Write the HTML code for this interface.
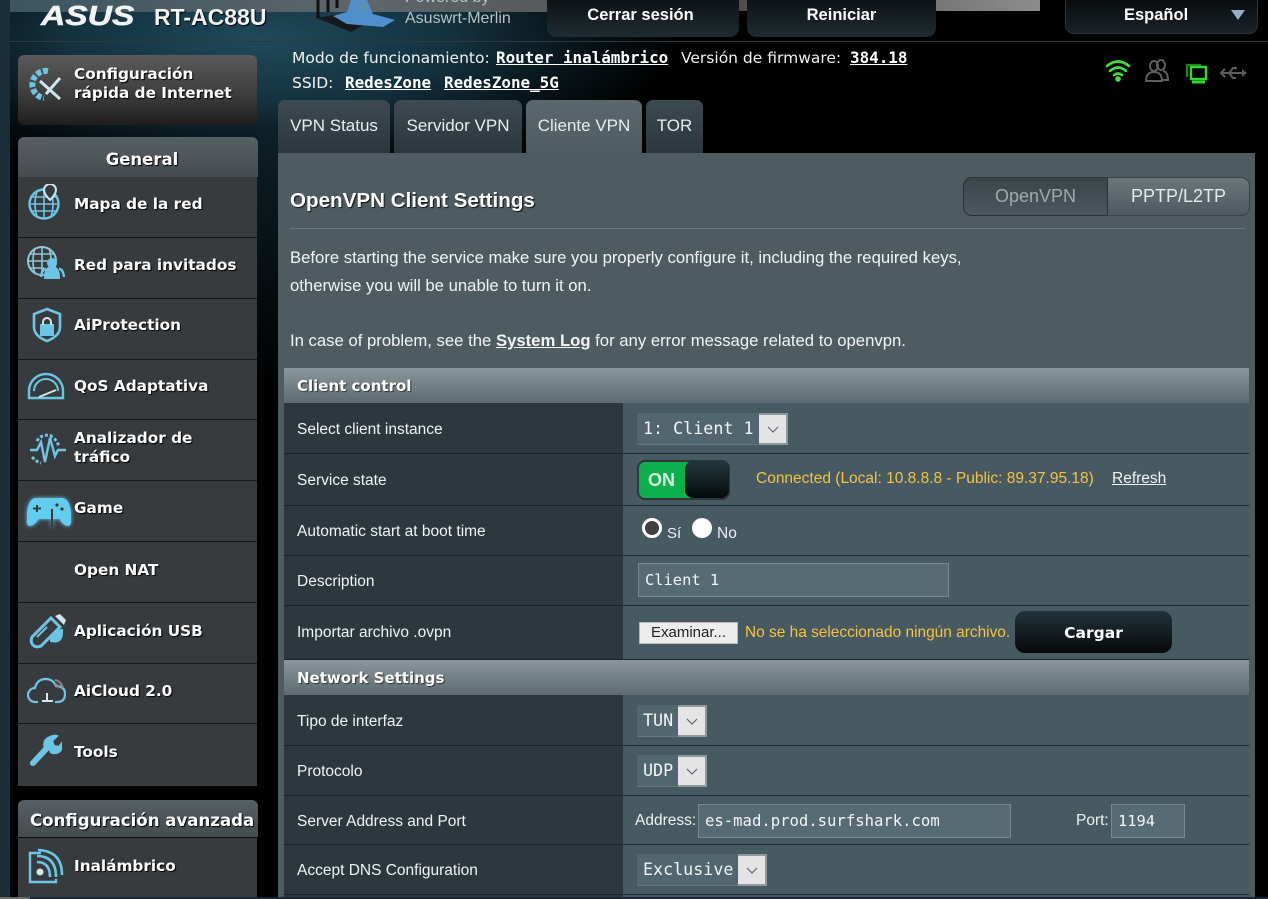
<!DOCTYPE html>
<html><head><meta charset="utf-8"><style>
html,body{margin:0;padding:0;width:1268px;height:899px;overflow:hidden;background:#000}
body{position:relative;font-family:"Liberation Sans",sans-serif;color:#fff}
.a{position:absolute;white-space:nowrap}
.dj{font-family:"DejaVu Sans",sans-serif;font-size:15.5px;line-height:20px;color:#f2f2f2}
.m{font-family:"DejaVu Sans Mono","Liberation Mono",monospace;font-size:15.9px;line-height:20px;font-weight:bold;text-decoration:underline;color:#fff}
.side{position:absolute;left:18px;width:239px;background:#383b3e;border-bottom:1px solid #15171a;box-sizing:border-box}
.st{position:absolute;left:74px;font:bold 15.3px/19px "DejaVu Sans",sans-serif;color:#fff;text-shadow:1px 1px 1px #000;white-space:nowrap}
.hd{position:absolute;background:linear-gradient(#565f64,#454c50);border-radius:6px 6px 0 0;left:18px;width:240px;border-bottom:1px solid #111}
.tab{position:absolute;top:100px;height:53px;background:linear-gradient(#3c4a51,#2c373d);border-radius:7px 7px 0 0;font-size:17px;line-height:52px;text-align:center;color:#e8eeee}
.th{position:absolute;left:284px;width:965px;height:35px;background:linear-gradient(#8a979c,#5c6b71);font:bold 15px/36px "DejaVu Sans",sans-serif;text-indent:13px;box-sizing:border-box;color:#fff;text-shadow:1px 1px 1px #333}
.l{position:absolute;left:284px;width:339px;background:#2d383e;border-bottom:1px solid #1b2327;box-sizing:border-box;font-size:15.5px;color:#f0f3f3;text-indent:13px}
.r{position:absolute;left:623px;width:626px;background:#475a61;border-bottom:1px solid #1f292e;box-sizing:border-box}
.sel{position:absolute;height:32px;background:#51666e;border-bottom:1px solid #64777e;box-sizing:border-box;font:16.7px/30px "DejaVu Sans Mono",monospace;color:#f2f5f5;text-indent:6px}
.ar{position:absolute;width:29px;height:32px;background:#e4e4e4;border:2px solid #8f999d;border-left:none;box-sizing:border-box}
.ar svg{position:absolute;left:8px;top:10px}
.inp{position:absolute;height:34px;background:#566b73;border:1px solid #76888f;box-sizing:border-box;font:15.4px/32px "DejaVu Sans Mono",monospace;color:#f2f5f5;text-indent:6px}
.y{color:#f5c242}
.ic{position:absolute;left:25px;fill:none;stroke:#6cc5e4;stroke-width:2}
.u{text-decoration:underline;font-weight:bold}
.p{font-size:16.7px;line-height:19px;color:#f2f4f4}
</style></head><body>

<!-- backgrounds -->
<div class="a" style="left:0;top:0;width:10px;height:899px;background:#1a2e3a"></div>
<div class="a" style="left:10px;top:0;width:1258px;height:160px;background:radial-gradient(ellipse 420px 140px at 250px 40px,#1f4a5a 0%,#14323f 45%,#08141a 75%,#000 100%)"></div>
<div class="a" style="left:10px;top:0;width:600px;height:12px;background:linear-gradient(90deg,#3c5560,#5d666a 60%,#555)"></div>
<div class="a" style="left:610px;top:0;width:430px;height:11px;background:linear-gradient(90deg,#333,#8c8c8c)"></div>
<div class="a" style="left:10px;top:41px;width:1258px;height:1px;background:#2c3a40"></div>
<div class="a" style="left:10px;top:160px;width:268px;height:739px;background:#000"></div>
<div class="a" style="left:257px;top:130px;width:21px;height:260px;background:linear-gradient(#0d2028,#000)"></div>

<!-- logo -->
<div class="a" style="left:41px;top:1px;font:italic bold 28px/30px 'Liberation Sans',sans-serif;letter-spacing:0;transform:scaleX(1.2);transform-origin:left;color:#f2f4f4;-webkit-text-stroke:.5px #f2f4f4">ASUS</div>
<div class="a" style="left:154px;top:4px;font:bold 23px/26px 'Liberation Sans',sans-serif;color:#f2f4f4;text-shadow:1px 1px 1px #000">RT-AC88U</div>
<svg class="a" style="left:315px;top:0" width="82" height="32" viewBox="0 0 82 32"><path d="M3 0v18M13 0v12M22 0v8" stroke="#111" stroke-width="3"/><path d="M2 18L26 14 50 24 36 32Z" fill="#16181a"/><path d="M36 0h16l6 14 22 6-12 7-36-3-14-8 14-4Z" fill="#4f90cc"/><path d="M44 0h6l4 10-12 2Z" fill="#5a8fb8"/></svg>
<div class="a" style="left:405px;top:-11px;font-size:16px;line-height:18px;color:#b9c2c4">Powered by</div>
<div class="a" style="left:405px;top:10px;font-size:16px;line-height:18px;color:#b9c2c4">Asuswrt-Merlin</div>

<!-- top buttons -->
<div class="a" style="left:547px;top:0;width:192px;height:37px;background:linear-gradient(#0d1316,#1f2c32);border-radius:0 0 9px 9px;font:bold 16.5px/30px 'Liberation Sans',sans-serif;text-align:center;text-indent:-5px">Cerrar sesión</div>
<div class="a" style="left:747px;top:0;width:189px;height:37px;background:linear-gradient(#0d1316,#1f2c32);border-radius:0 0 9px 9px;font:bold 16.5px/30px 'Liberation Sans',sans-serif;text-align:center">Reiniciar</div>
<div class="a" style="left:1065px;top:-2px;width:193px;height:36px;background:linear-gradient(#080b0d,#1a2329);border:1px solid #2b363b;border-radius:0 0 9px 9px;box-sizing:border-box;font:bold 16.5px/32px 'Liberation Sans',sans-serif;text-indent:58px">Español</div>
<svg class="a" style="left:1230px;top:9px" width="16" height="12"><path d="M1 1h14l-7 10z" fill="#8fb0c6"/></svg>

<!-- status -->
<div class="a dj" style="left:292px;top:48px">Modo de funcionamiento:</div>
<div class="a m" style="left:496px;top:48px">Router inalámbrico</div>
<div class="a dj" style="left:681px;top:48px">Versión de firmware:</div>
<div class="a m" style="left:850px;top:48px">384.18</div>
<div class="a dj" style="left:292px;top:73px">SSID:</div>
<div class="a m" style="left:345px;top:73px">RedesZone</div>
<div class="a m" style="left:444px;top:73px">RedesZone_5G</div>

<!-- status icons -->
<svg class="a" style="left:1100px;top:52px" width="160" height="36" viewBox="0 0 160 36" fill="none">
<g stroke="#3ee23e" stroke-width="2.6" stroke-linecap="round"><path d="M7 14Q18 5 29 14"/><path d="M10 19Q18 12 26 19"/><path d="M14 23Q18 20 22 23"/></g><circle cx="18" cy="27" r="2.8" fill="#3ee23e"/>
<g stroke="#5e5e5e" stroke-width="2"><ellipse cx="54" cy="14" rx="4" ry="5"/><ellipse cx="61" cy="13" rx="4" ry="5"/><path d="M46 29q0-9 8-9t8 9zM63 19q5 1 5 9h-6"/></g>
<path d="M87 25V13h14" stroke="#1c8a1c" stroke-width="2.2"/><rect x="91" y="15" width="15" height="12" stroke="#2fd82f" stroke-width="2.4"/><path d="M92 30h13" stroke="#2fd82f" stroke-width="3"/>
<g stroke="#5e5e5e" stroke-width="2"><path d="M122 21h22"/><path d="M125 17l-4 4 4 4M129 21l4-5h4M129 21l4 5h3"/></g><path d="M142 17l5 4-5 4z" fill="#5e5e5e"/>
</svg>

<!-- quick setup -->
<div class="a" style="left:18px;top:55px;width:239px;height:70px;background:linear-gradient(#5a5a5a,#3e3e3e 55%,#1e1e1e);border-radius:6px"></div>
<div class="st" style="top:65px">Configuración<br>rápida de Internet</div>
<svg class="a" style="left:28px;top:66px" width="36" height="38" viewBox="0 0 36 38" fill="none" stroke="#6cc5e4"><path d="M20 5a13 13 0 1 0-4 27" stroke-width="6" stroke-dasharray="5 2"/><path d="M12 15l20 18M32 12L18 28" stroke="#cfe6ee" stroke-width="3"/></svg>

<!-- General -->
<div class="hd" style="top:137px;height:40px;font:bold 16.5px/46px 'DejaVu Sans',sans-serif;text-align:center;text-indent:8px;text-shadow:1px 1px 1px #000">General</div>

<div class="side" style="top:177px;height:61px"></div>
<div class="side" style="top:238px;height:61px"></div>
<div class="side" style="top:299px;height:61px"></div>
<div class="side" style="top:360px;height:60px"></div>
<div class="side" style="top:420px;height:61px"></div>
<div class="side" style="top:481px;height:61px"></div>
<div class="side" style="top:542px;height:61px"></div>
<div class="side" style="top:603px;height:61px"></div>
<div class="side" style="top:664px;height:60px"></div>
<div class="side" style="top:724px;height:62px;border-bottom:none"></div>

<div class="st" style="top:195px">Mapa de la red</div>
<div class="st" style="top:256px">Red para invitados</div>
<div class="st" style="top:316px">AiProtection</div>
<div class="st" style="top:377px">QoS Adaptativa</div>
<div class="st" style="top:429px">Analizador de<br>tráfico</div>
<div class="st" style="top:499px">Game</div>
<div class="st" style="top:561px">Open NAT</div>
<div class="st" style="top:622px">Aplicación USB</div>
<div class="st" style="top:682px">AiCloud 2.0</div>
<div class="st" style="top:743px">Tools</div>

<!-- sidebar icons -->
<svg class="ic" style="top:184px;left:28px" width="36" height="36" viewBox="0 0 36 36"><circle cx="16" cy="20" r="14.5" stroke-width="2.4"/><path d="M2 20h29M4 13h24M4 27h24M16 6v28M9 7q-4 13 0 26M23 7q4 13 0 26" stroke-width="1.6"/><path d="M22 16q-6-6-6-10a6 6 0 0 1 12 0q0 4-6 10z" fill="#383b3e" stroke="#cfe6ee"/></svg>
<svg class="ic" style="top:246px;left:27px" width="38" height="34" viewBox="0 0 38 34"><circle cx="15" cy="15" r="14" stroke="#8fc7da"/><path d="M1 15h28M3 8h24M3 22h14M15 1v28M8 2q-4 13 0 26M22 2q4 13 0 26" stroke-width="1.6" stroke="#8fc7da"/><circle cx="25" cy="17" r="4" fill="#6cc5e4"/><path d="M18 32q0-11 7-11t7 11z" fill="#6cc5e4"/><path d="M14 31q1-8 5-8M37 31q-1-8-5-8" stroke-width="2.4"/></svg>
<svg class="ic" style="top:307px;left:31px" width="32" height="36" viewBox="0 0 32 36"><path d="M16 2l13 5v13q0 9-13 14Q3 29 3 20V7z" stroke-width="2.6"/><rect x="10" y="18" width="12" height="10" fill="#6cc5e4"/><path d="M12 18v-3a4 4 0 0 1 8 0v3" stroke="#cfe6ee"/></svg>
<svg class="ic" style="top:371px;left:27px" width="38" height="30" viewBox="0 0 38 30"><path d="M2 27V20a17 17 0 0 1 34 0v7z" stroke-width="2.4"/><path d="M7 20a12 12 0 0 1 24 0"/><path d="M12 26l17-7" stroke="#cfe6ee"/></svg>
<svg class="ic" style="top:431px;left:29px" width="38" height="34" viewBox="0 0 38 34"><path d="M1 19h7l4-8 4 20 5-24 5 18 3-6h8" stroke-width="2.4"/><path d="M8 10q5-8 15-5M21 5q7 3 9 11M3 26q5 5 9 6" stroke-width="3" stroke-dasharray="3 2"/></svg>
<svg class="ic" style="top:495px;left:27px;filter:drop-shadow(0 0 2px #6cc5e4)" width="44" height="34" viewBox="0 0 44 34"><path d="M8 4h28q6 2 7 14t-2 12q-4 0-8-7H11q-4 7-8 7T1 18Q2 6 8 4z" fill="#63cdef" stroke="#63cdef"/><path d="M10 10v7M6 13.5h8" stroke="#383b3e"/><circle cx="30" cy="10" r="1.6" fill="#383b3e" stroke="none"/><circle cx="35" cy="14" r="1.6" fill="#383b3e" stroke="none"/><path d="M25 32V14" stroke="#383b3e"/></svg>
<svg class="ic" style="top:613px;left:29px" width="38" height="36" viewBox="0 0 38 36"><path d="M3 24L22 5l9 9-19 19q-5 2-8-1t-1-8z" stroke-width="3"/><path d="M26 3l5-2 6 6-2 5z" fill="#cfe6ee" stroke="none"/><path d="M8 24l10-10"/><path d="M22 28q0-8 11-11 1 14-11 11z" fill="#6cc5e4"/></svg>
<svg class="ic" style="top:676px;left:27px" width="40" height="30" viewBox="0 0 40 30"><path d="M11 26H8a7 7 0 0 1 0-14q2-9 11-9 7 0 10 7 9 0 9 8 0 8-8 8h-2" stroke-width="2.2"/><path d="M15 25h11M20 17v8" stroke="#cfe6ee"/><path d="M28 4q6 1 8 8M28 8q3 1 4 4" stroke="#888"/></svg>
<svg class="ic" style="top:734px;left:30px" width="32" height="32" viewBox="0 0 32 32"><path d="M3 29L17 14" stroke-width="6" stroke-linecap="round"/><path d="M15 15q-3-9 5-12 4-2 7-1l-5 5 2 5 5 1 3-4q1 6-3 9-6 3-9-1" fill="#6cc5e4"/></svg>

<!-- advanced -->
<div class="hd" style="top:800px;height:37px;font:bold 16.6px/42px 'DejaVu Sans',sans-serif;text-indent:12px;white-space:nowrap;text-shadow:1px 1px 1px #000">Configuración avanzada</div>
<div class="side" style="top:838px;height:61px;border:none"></div>
<div class="st" style="top:857px">Inalámbrico</div>
<svg class="ic" style="top:848px;left:28px" width="36" height="36" viewBox="0 0 36 36"><path d="M13 5H2v29h26v-3" stroke-width="2.4"/><circle cx="12" cy="24" r="3.5" fill="#cfe6ee" stroke="none"/><path d="M9 14q13 0 13 15M9 8q19 0 19 21M10 2q24 1 24 25" stroke-width="2.6"/></svg>

<!-- tabs -->
<div class="tab" style="left:278px;width:112px">VPN Status</div>
<div class="tab" style="left:394px;width:128px">Servidor VPN</div>
<div class="tab" style="left:526px;width:116px;background:linear-gradient(#5b686d,#4f5c62)">Cliente VPN</div>
<div class="tab" style="left:646px;width:57px">TOR</div>

<!-- panel -->
<div class="a" style="left:278px;top:153px;width:977px;height:746px;background:#4e5c62"></div>
<div class="a" style="left:290px;top:188px;font-size:20.6px;line-height:26px;font-weight:bold;color:#fff;text-shadow:1px 1px 1px #111">OpenVPN Client Settings</div>
<div class="a" style="left:963px;top:177px;width:144px;height:39px;background:linear-gradient(#3a454a,#4c585e);border:1px solid #2a3236;border-right:none;border-radius:9px 0 0 9px;box-sizing:border-box;font-size:18px;line-height:37px;text-align:center;color:#9eaaae">OpenVPN</div>
<div class="a" style="left:1107px;top:177px;width:143px;height:39px;background:linear-gradient(#6b767b,#4e5a60);border:1px solid #3a4448;border-left:1px solid #2a3236;border-radius:0 9px 9px 0;box-sizing:border-box;font-size:18px;line-height:37px;text-align:center;color:#e4e9ea">PPTP/L2TP</div>
<div class="a" style="left:290px;top:228px;width:955px;height:1px;background:#6c787d"></div>
<div class="a p" style="left:290px;top:248px">Before starting the service make sure you properly configure it, including the required keys,</div>
<div class="a p" style="left:290px;top:276px">otherwise you will be unable to turn it on.</div>
<div class="a p" style="left:290px;top:331px">In case of problem, see the <span class="u">System Log</span> for any error message related to openvpn.</div>

<!-- table -->
<div class="th" style="top:368px">Client control</div>
<div class="l" style="top:403px;height:51px;line-height:53px">Select client instance</div><div class="r" style="top:403px;height:51px"></div>
<div class="l" style="top:454px;height:52px;line-height:53px">Service state</div><div class="r" style="top:454px;height:52px"></div>
<div class="l" style="top:506px;height:50px;line-height:51px">Automatic start at boot time</div><div class="r" style="top:506px;height:50px"></div>
<div class="l" style="top:556px;height:50px;line-height:51px">Description</div><div class="r" style="top:556px;height:50px"></div>
<div class="l" style="top:606px;height:54px;line-height:54px">Importar archivo .ovpn</div><div class="r" style="top:606px;height:54px"></div>
<div class="th" style="top:660px">Network Settings</div>
<div class="l" style="top:695px;height:51px;line-height:53px">Tipo de interfaz</div><div class="r" style="top:695px;height:51px"></div>
<div class="l" style="top:746px;height:50px;line-height:51px">Protocolo</div><div class="r" style="top:746px;height:50px"></div>
<div class="l" style="top:796px;height:49px;line-height:51px">Server Address and Port</div><div class="r" style="top:796px;height:49px"></div>
<div class="l" style="top:845px;height:50px;line-height:52px">Accept DNS Configuration</div><div class="r" style="top:845px;height:50px"></div>
<div class="l" style="top:895px;height:4px"></div><div class="r" style="top:895px;height:4px"></div>
<div class="a" style="left:0;top:897px;width:1268px;height:2px;background:#1b2538"></div>
<div class="a" style="left:0;top:897px;width:30px;height:2px;background:#6a6a6a"></div>

<!-- controls -->
<div class="sel" style="left:637px;top:413px;width:122px">1: Client 1</div>
<div class="ar" style="left:759px;top:413px"><svg width="13" height="10"><path d="M1 2l5 5 5-5" fill="none" stroke="#667" stroke-width="1.2"/></svg></div>

<div class="a" style="left:637px;top:460px;width:93px;height:40px;background:#2c363b;border-radius:8px"></div>
<div class="a" style="left:639px;top:462px;width:54px;height:36px;background:#0cb04a;border-radius:6px 0 0 6px;font:bold 18px/37px 'Liberation Sans',sans-serif;text-indent:9px;color:#d8f5e2">ON</div>
<div class="a" style="left:685px;top:461px;width:44px;height:37px;background:linear-gradient(#24373d,#050a0c);border-radius:8px"></div>
<div class="a y" style="left:756px;top:470px;font-size:15.5px;line-height:18px">Connected (Local: 10.8.8.8 - Public: 89.37.95.18)</div>
<div class="a" style="left:1112px;top:470px;font-size:15.5px;line-height:18px;text-decoration:underline;color:#f2f4f4">Refresh</div>

<div class="a" style="left:642px;top:518px;width:20px;height:20px;border-radius:50%;background:#3f3f3f;border:3.5px solid #fff;box-sizing:border-box"></div>
<div class="a" style="left:667px;top:525px;font-size:15px;line-height:18px;color:#eef">Sí</div>
<div class="a" style="left:692px;top:518px;width:20px;height:20px;border-radius:50%;background:#fff"></div>
<div class="a" style="left:717px;top:525px;font-size:15.5px;line-height:18px;color:#eef">No</div>

<div class="inp" style="left:638px;top:563px;width:311px">Client 1</div>

<div class="a" style="left:639px;top:622px;width:99px;height:22px;background:#ededed;border:1px solid #b8b8b8;box-sizing:border-box;font-size:15px;line-height:20px;text-align:center;color:#222">Examinar...</div>
<div class="a y" style="left:745px;top:624px;font-size:15.45px;line-height:18px">No se ha seleccionado ningún archivo.</div>
<div class="a" style="left:1015px;top:611px;width:157px;height:42px;background:linear-gradient(#22323a,#06090b);border-radius:10px;font:bold 15.5px/44px 'DejaVu Sans',sans-serif;text-align:center">Cargar</div>

<div class="sel" style="left:637px;top:705px;width:41px">TUN</div>
<div class="ar" style="left:678px;top:705px"><svg width="13" height="10"><path d="M1 2l5 5 5-5" fill="none" stroke="#667" stroke-width="1.2"/></svg></div>
<div class="sel" style="left:637px;top:755px;width:41px">UDP</div>
<div class="ar" style="left:678px;top:755px"><svg width="13" height="10"><path d="M1 2l5 5 5-5" fill="none" stroke="#667" stroke-width="1.2"/></svg></div>

<div class="a" style="left:635px;top:812px;font-size:15.5px;line-height:18px;color:#eef2f2">Address:</div>
<div class="inp" style="left:698px;top:804px;width:313px;font-size:15.6px">es-mad.prod.surfshark.com</div>
<div class="a" style="left:1076px;top:812px;font-size:15.5px;line-height:18px;color:#eef2f2">Port:</div>
<div class="inp" style="left:1111px;top:804px;width:74px">1194</div>

<div class="sel" style="left:637px;top:854px;width:101px">Exclusive</div>
<div class="ar" style="left:738px;top:854px"><svg width="13" height="10"><path d="M1 2l5 5 5-5" fill="none" stroke="#667" stroke-width="1.2"/></svg></div>

</body></html>
